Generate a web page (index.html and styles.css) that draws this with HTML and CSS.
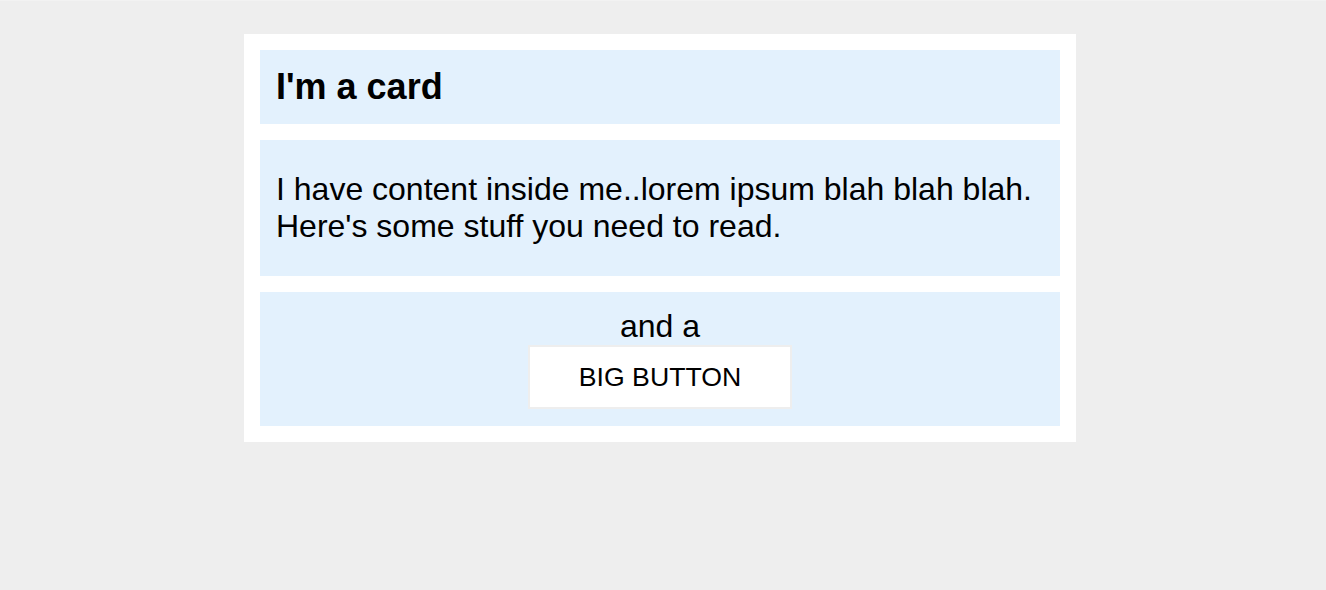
FILE: index.html
```html
<!DOCTYPE html>
<html lang="en">
<head>
<meta charset="utf-8">
<title>Card</title>
<link rel="stylesheet" href="styles.css">
</head>
<body>
<div class="page">
  <div class="card">
    <div class="section header">
      <h1 class="title">I'm a card</h1>
    </div>
    <div class="section body">
      <p class="text">I have content inside me..lorem ipsum blah blah blah. Here's some stuff you need to read.</p>
    </div>
    <div class="section footer">
      <div class="lead">and a</div>
      <button class="big-button">BIG BUTTON</button>
    </div>
  </div>
</div>
</body>
</html>
```
FILE: styles.css
```css
html, body {
  margin: 0;
  padding: 0;
  background: #eeeeee;
}
body {
  font-family: "Liberation Sans", Arial, Helvetica, sans-serif;
  color: #000;
  border-top: 1px solid #f2f2f2;
}
.page {
  display: flex;
  justify-content: center;
  padding: 33px 6px 0 0;
}
.card {
  width: 800px;
  background: #fff;
  padding: 16px;
  display: flex;
  flex-direction: column;
  gap: 16px;
}
.section {
  background: #e3f1fd;
  padding: 16px;
}
.title {
  margin: 0;
  font-size: 36px;
  font-weight: bold;
  line-height: 42px;
}
.text {
  margin: 15px 0;
  font-size: 32px;
  line-height: 37px;
}
.footer {
  display: flex;
  flex-direction: column;
  align-items: center;
  padding-bottom: 17px;
}
.lead {
  font-size: 32px;
  line-height: 37px;
}
.big-button {
  font-family: "Liberation Sans", Arial, Helvetica, sans-serif;
  font-size: 26.67px;
  line-height: 30px;
  padding: 15px 49px;
  background: #fff;
  border: 2px solid #eeeeee;
  color: #000;
  border-radius: 0;
}
```
